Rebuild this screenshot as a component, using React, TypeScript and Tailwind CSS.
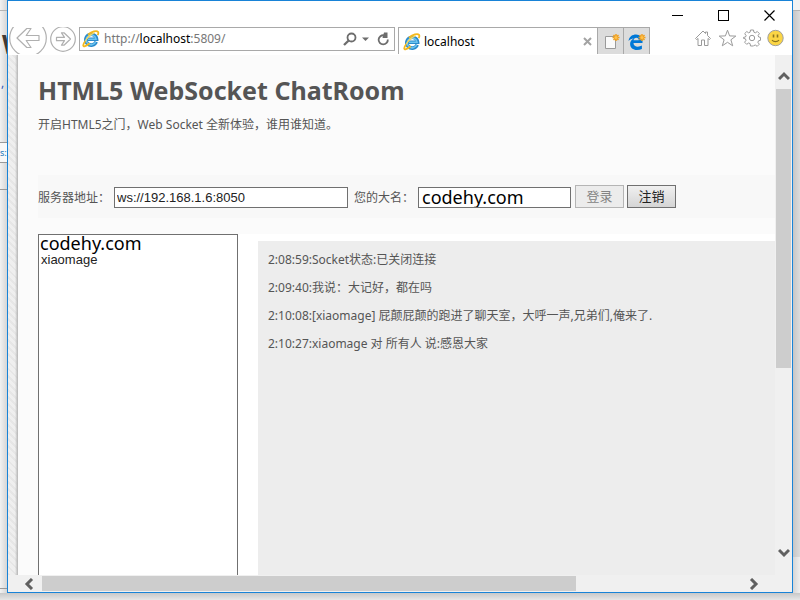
/**
 * App - Browser window showing the HTML5 WebSocket chat room page.
 */

import type { ReactNode } from 'react';

const messages = [
  '2:08:59:Socket状态:已关闭连接',
  '2:09:40:我说：大记好，都在吗',
  '2:10:08:[xiaomage] 屁颠屁颠的跑进了聊天室，大呼一声,兄弟们,俺来了.',
  '2:10:27:xiaomage 对 所有人 说:感恩大家',
];

function IeLogo() {
  return (
    <svg width="18" height="18" viewBox="0 0 18 18" className="shrink-0" aria-hidden="true">
      <path
        d="M14.2 11.8A5.4 5.4 0 1 1 14.6 9.3H5.2"
        fill="none"
        stroke="#2a8acb"
        strokeWidth="3.6"
      />
      <path
        d="M13.6 12A4.9 4.9 0 1 1 14 9.2H6"
        fill="none"
        stroke="#6cc4f0"
        strokeWidth="1.6"
      />
      <path
        d="M3.2 11.2C.6 14.6.6 17 3 16.2c1.4-.5 3-1.5 4.6-2.9M6 4.8C10 1.6 14.5 0 16 1.8c.6.8.4 2-.3 3.4"
        fill="none"
        stroke="#f4b81c"
        strokeWidth="1.8"
      />
      <path d="M3.2 11.2C5 8 8.5 4.5 12.5 2.6" fill="none" stroke="#fbd85a" strokeWidth="1.3" />
    </svg>
  );
}

function Spark() {
  return (
    <g stroke="#f0a020" strokeWidth="1.5">
      <path d="M15 1v7M11.5 4.5h7M12.5 2l5 5M17.5 2l-5 5" />
      <circle cx="15" cy="4.5" r="1.5" fill="#ffc14a" stroke="none" />
    </g>
  );
}

function Chevron({ d, label, className }: { d: string; label: string; className: string }) {
  return (
    <button aria-label={label} className={`flex shrink-0 items-center justify-center ${className}`}>
      <svg width="12" height="12" viewBox="0 0 12 12" fill="none" stroke="#606060" strokeWidth="3">
        <path d={d} />
      </svg>
    </button>
  );
}

function CaptionButton({ label, children }: { label: string; children: ReactNode }) {
  return (
    <button aria-label={label} className="flex h-7 w-[46px] items-center justify-center">
      <svg width="11" height="11" viewBox="0 0 11 11" fill="none" stroke="#000" shapeRendering="crispEdges">
        {children}
      </svg>
    </button>
  );
}

function TitleBar() {
  return (
    <div className="flex h-[26px] shrink-0 justify-end">
      <CaptionButton label="最小化">
        <path d="M0 5.5h11" />
      </CaptionButton>
      <CaptionButton label="最大化">
        <rect x=".5" y=".5" width="10" height="10" />
      </CaptionButton>
      <CaptionButton label="关闭">
        <path d="M.5.5l10 10M10.5.5l-10 10" shapeRendering="auto" strokeWidth="1.2" />
      </CaptionButton>
    </div>
  );
}

function Toolbar() {
  return (
    <div className="flex h-[27px] shrink-0 items-start overflow-hidden pr-2 pl-px">
      <button aria-label="后退" className="-mt-2 shrink-0">
        <svg width="38" height="38" viewBox="0 0 38 38" fill="none" stroke="#b0b0b0" strokeWidth="1.2">
          <circle cx="19" cy="19" r="18.3" />
          <path d="M30 16.5H17.2L22 9.5h-4.2L8 19l9.8 9.5H22l-4.8-7H30z" strokeLinejoin="round" />
        </svg>
      </button>
      <button aria-label="前进" className="-mt-px ml-[3px] shrink-0">
        <svg width="26" height="26" viewBox="0 0 26 26" fill="none" stroke="#b0b0b0" strokeWidth="1.2">
          <circle cx="13" cy="13" r="12.3" />
          <path d="M6.5 11.3h8l-3-4.5H14l6.5 6.2-6.5 6.2h-2.5l3-4.5h-8z" strokeLinejoin="round" />
        </svg>
      </button>

      {/* Address bar */}
      <div className="ml-[3px] flex h-6 min-w-0 flex-1 items-center border border-[#a9a9a9] bg-white pr-1 pl-[2px]">
        <IeLogo />
        <div role="textbox" aria-label="地址" className="ml-1 min-w-0 flex-1 truncate text-[12px] text-[#777]">
          http://<span className="text-black">localhost</span>:5809/
        </div>
        <button aria-label="搜索">
          <svg width="15" height="15" viewBox="0 0 15 15" fill="none" stroke="#6d6d6d">
            <circle cx="9.5" cy="5.5" r="4" strokeWidth="1.8" />
            <path d="M6.7 8.5L2 13" strokeWidth="2.4" />
          </svg>
        </button>
        <button aria-label="显示地址" className="mx-1">
          <svg width="9" height="5" viewBox="0 0 9 5" fill="#6d6d6d">
            <path d="M1 .5h7L4.5 4z" />
          </svg>
        </button>
        <button aria-label="刷新" className="ml-[3px]">
          <svg width="13" height="14" viewBox="0 0 13 14" fill="none" stroke="#6d6d6d" strokeWidth="1.8">
            <path d="M10.8 7.5A4.6 4.6 0 1 1 7 3.3" />
            <path d="M7 .5h3.5V6H5.5z" fill="#6d6d6d" stroke="none" />
          </svg>
        </button>
      </div>

      {/* Tabs */}
      <div className="ml-[3px] flex h-7 w-[200px] shrink-0 items-center border border-b-0 border-[#a9a9a9] bg-white pr-[5px] pl-1">
        <IeLogo />
        <span className="ml-[3px] flex-1 text-[12px] text-black">localhost</span>
        <button aria-label="关闭标签页">
          <svg width="9" height="9" viewBox="0 0 9 9" stroke="#a3a3a3" strokeWidth="2">
            <path d="M1 1l7 7M8 1L1 8" />
          </svg>
        </button>
      </div>
      <button
        aria-label="新建标签页"
        className="flex h-7 w-[26px] shrink-0 items-center justify-center border-t border-r border-[#a9a9a9] bg-[#dcdcdc]"
      >
        <svg width="19" height="18" viewBox="0 0 19 18">
          <path d="M4.5 3.5h10v12h-10z" fill="#fafafa" stroke="#9a9a9a" />
          <Spark />
        </svg>
      </button>
      <button
        aria-label="Microsoft Edge"
        className="flex h-7 w-[26px] shrink-0 items-center justify-center border-t border-r border-[#a9a9a9] bg-[#dcdcdc]"
      >
        <svg width="19" height="18" viewBox="0 0 19 18">
          <path
            d="M1.5 8C2.2 3.5 5.5 1.5 9 1.5c4 0 6.5 3 6.5 6.5v2H6.5c0 2.5 2 3.7 4.3 3.7 1.5 0 2.9-.4 4.1-1.1v3.3c-1.4.7-3 1.1-4.9 1.1-4 0-6.9-2.3-6.9-6 0-2.6 1.4-4.5 3.6-5.6C4.5 5.6 2.9 6.5 1.5 8zm5-.8h5.3c0-1.6-.9-2.5-2.5-2.5S6.8 5.7 6.5 7.2z"
            fill="#0078d7"
          />
          <Spark />
        </svg>
      </button>

      <div className="mt-[2px] ml-[44px] flex shrink-0 gap-[6px]">
        <button aria-label="主页">
          <svg width="18" height="18" viewBox="0 0 18 18" fill="none" stroke="#9a9a9a">
            <path d="M1.5 9.5L9 2l2.5 2.5V3h2v3.5l3 3-1 1L14 9.5v7h-3.5V11h-3v5.5H4v-7l-1.500 1z" strokeLinejoin="round" />
          </svg>
        </button>
        <button aria-label="收藏夹">
          <svg width="19" height="18" viewBox="0 0 19 18" fill="none" stroke="#9a9a9a">
            <path d="M9.5 1.2l2.1 5.7 6.2.2-4.9 3.7 1.8 6-5.2-3.5-5.2 3.5 1.8-6L1.2 7.1l6.2-.2z" strokeLinejoin="round" />
          </svg>
        </button>
        <button aria-label="工具">
          <svg width="18" height="18" viewBox="0 0 18 18" fill="none" stroke="#9a9a9a">
            <path
              d="M7.5 1h3l.4 2.2 1.5.6 1.9-1.3 2.1 2.1-1.3 1.9.6 1.5 1.8.4v2.9l-2 .5-.6 1.5 1.4 1.9-2.1 2.1-1.9-1.3-1.5.6L10.5 17h-3l-.4-2.4-1.5-.6-1.9 1.3-2.1-2.1 1.4-1.9-.6-1.5-1.9-.4V8.400l2-.4.6-1.5-1.4-1.9 2.1-2.1 1.8 1.3 1.5-.6z"
              strokeLinejoin="round"
            />
            <circle cx="9" cy="9" r="2.7" />
          </svg>
        </button>
        <button aria-label="微笑">
          <svg width="17" height="18" viewBox="0 0 17 18">
            <circle cx="8.5" cy="9" r="7.7" fill="#fbd545" stroke="#a0a0a0" />
            <path d="M6.5 5.5v3M10.5 5.5v3" stroke="#8a7420" strokeWidth="1.6" />
            <path d="M5 11.2c1.8 2 5.2 2 7 0" fill="none" stroke="#8a7420" strokeWidth="1.2" />
          </svg>
        </button>
      </div>
    </div>
  );
}

function ChatRoom() {
  return (
    <main className="flex min-w-0 flex-1 flex-col pt-[18px] pl-5">
      <h1 className="text-[25px] leading-[34px] font-bold text-[#555]">HTML5 WebSocket ChatRoom</h1>
      <p className="mt-2 leading-5">开启HTML5之门，Web Socket 全新体验，谁用谁知道。</p>

      {/* Connection form */}
      <form
        className="mt-10 flex h-[43px] shrink-0 items-end bg-[#f8f8f8] pb-[10px] whitespace-nowrap"
        onSubmit={(e) => e.preventDefault()}
      >
        <label htmlFor="server" className="w-[76px] leading-[21px]">
          服务器地址：
        </label>
        <input
          id="server"
          defaultValue="ws://192.168.1.6:8050"
          className="h-[21px] w-[234px] border border-[#707070] bg-white px-[2px] font-['Liberation_Sans',sans-serif] text-[13px] text-[#222]"
        />
        <label htmlFor="nickname" className="ml-[6px] w-16 leading-[21px]">
          您的大名：
        </label>
        <input
          id="nickname"
          defaultValue="codehy.com"
          className="h-[21px] w-[153px] border border-[#707070] bg-white px-[3px] text-[18px] text-black"
        />
        <button
          disabled
          className="ml-1 h-[23px] w-[49px] border border-[#b5b5b5] bg-[#ececec] text-[13px] text-[#838383]"
        >
          登录
        </button>
        <button className="ml-[3px] h-[23px] w-[49px] border border-[#707070] bg-linear-to-b from-[#f0f0f0] to-[#d5d5d5] text-[13px] text-[#222]">
          注销
        </button>
      </form>

      {/* User list and message log */}
      <div className="mt-4 flex min-h-0 flex-1 bg-white">
        <select
          multiple
          aria-label="在线用户"
          className="w-[200px] shrink-0 overflow-hidden border border-b-0 border-[#707070] bg-white font-['Liberation_Sans',sans-serif] text-[13px] text-[#222]"
        >
          <option className="flex h-4 min-h-0 items-center px-px font-['Noto_Sans',sans-serif] text-[18px] text-black">
            codehy.com
          </option>
          <option className="flex h-4 min-h-0 items-center px-[2px]">xiaomage</option>
        </select>
        <ul className="mt-[7px] ml-5 min-w-0 flex-1 bg-[#ededed] px-[10px] pt-[5px]">
          {messages.map((message) => (
            <li key={message} className="h-7 truncate leading-7">
              {message}
            </li>
          ))}
        </ul>
      </div>
    </main>
  );
}

export default function App() {
  return (
    <div className="flex h-screen flex-col overflow-hidden bg-[#dedede] font-['Noto_Sans','Noto_Sans_CJK_SC',sans-serif] text-[12px] text-[#555]">
      <div className="flex min-h-0 flex-1">
        {/* Edge of the window behind */}
        <div className="flex w-[7px] shrink-0 flex-col overflow-hidden bg-linear-to-r from-[#f2f2f2] to-[#d6d6d6]">
          <div className="h-[11px] shrink-0 border-b border-[#b4b4b4]" />
          <div className="flex h-[66px] shrink-0 items-center pl-[2px] text-[26px] font-bold text-[#443a33]">W</div>
          <div className="h-[66px] shrink-0 border-b border-[#999] pl-px leading-3 text-[#3355bb]">,</div>
          <div className="h-5 shrink-0 border-b border-[#999] bg-[#f8f8f8] text-[9px] leading-5 text-[#2277bb]">s:</div>
          <div className="h-[27px] shrink-0 border-b border-[#999]" />
          <div className="flex-1 border-b border-[#999]" />
          <div className="h-1 shrink-0" />
        </div>

        <div className="flex min-w-0 flex-1 flex-col border border-[#1883d7] bg-white">
          <TitleBar />
          <Toolbar />
          <div className="mt-px flex min-h-0 flex-1 bg-[#fbfbfb]">
            <div className="w-[10px] shrink-0 bg-[repeating-linear-gradient(45deg,#e6e6e6_0_2px,#efefef_2px_5px)]">
              <div className="ml-auto h-full w-[3px] bg-linear-to-r from-transparent to-[#b4b4b4]" />
            </div>
            <ChatRoom />
            <div className="flex w-[17px] shrink-0 flex-col bg-[#f0f0f0] px-px">
              <Chevron label="向上滚动" d="M1 9l5-5 5 5" className="h-[34px] pt-2" />
              <div className="h-[279px] bg-[#cdcdcd]" />
              <Chevron label="向下滚动" d="M1 3l5 5 5-5" className="mt-auto h-[44px]" />
            </div>
          </div>
          <div className="flex h-[17px] shrink-0 bg-[#f0f0f0] py-px pr-[30px]">
            <Chevron label="向左滚动" d="M9 1L4 6l5 5" className="w-[34px] pl-2" />
            <div className="flex-1">
              <div className="h-full w-[76%] bg-[#cdcdcd]" />
            </div>
            <Chevron label="向右滚动" d="M3 1l5 5-5 5" className="w-[17px]" />
          </div>
        </div>

        <div className="flex w-[7px] shrink-0 flex-col bg-linear-to-r from-[#c6c6c6] to-[#dcdcdc]">
          <div className="h-[11px] shrink-0 border-b border-[#b4b4b4] bg-[#f2f2f2]" />
          <div className="flex-1" />
          <div className="h-9 shrink-0 bg-linear-to-r from-[#d6d6d6] to-[#efefef]" />
        </div>
      </div>
      <div className="h-[7px] shrink-0 bg-linear-to-b from-[#c8c8c8] to-[#e6e6e6]" />
    </div>
  );
}
